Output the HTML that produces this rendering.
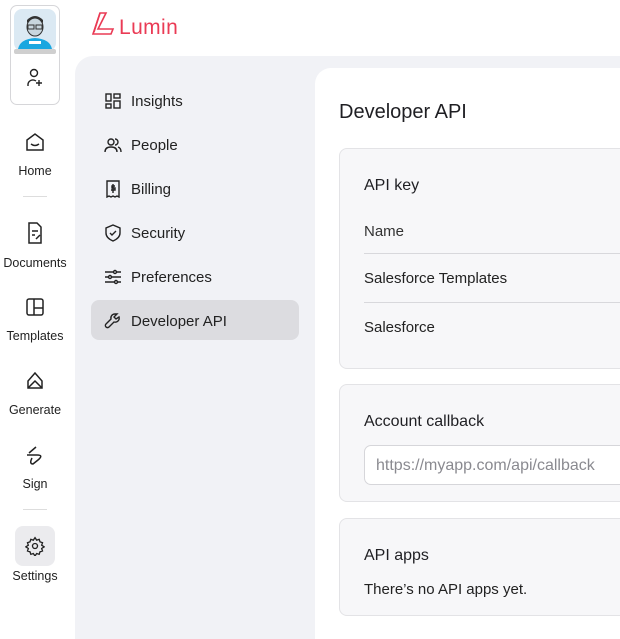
<!DOCTYPE html>
<html><head><meta charset="utf-8"><style>
*{box-sizing:border-box;margin:0;padding:0}
html,body{width:620px;height:639px;overflow:hidden}
body{background:#fff;font-family:"Liberation Sans",sans-serif;color:#1f1f23;position:relative}
.abs{position:absolute}
.nav{position:absolute;left:0;width:70px;text-align:center;font-size:12.5px;color:#222}
.nav svg{display:block;margin:0 auto}
.nav div{margin-top:11px}
.sep{position:absolute;left:23px;width:24px;height:1px;background:#ddd}
.side{position:absolute;left:75px;top:56px;width:560px;height:600px;background:#f1f2f6;border-top-left-radius:18px}
.item{position:absolute;left:91px;width:208px;height:40px;border-radius:8px;font-size:15px;display:flex;align-items:center;padding-left:13px;padding-top:2px;color:#222}
.item svg{margin-right:9px}
.main{position:absolute;left:315px;top:68px;width:320px;height:600px;background:#fff;border-top-left-radius:16px}
.card{position:absolute;left:339px;width:300px;background:#f7f7f9;border:1px solid #e3e3e6;border-radius:8px}
.t{position:absolute;font-size:15px;color:#222}
.h{position:absolute;font-size:16px;color:#1f1f23}
.line{position:absolute;left:364px;width:270px;height:1px;background:#d8d8dc}
</style></head><body>
<div class="abs" style="left:10px;top:5px;width:50px;height:100px;border:1px solid #d6d6d9;border-radius:7px"></div>
<svg class="abs" style="left:14px;top:9px" width="42" height="46" viewBox="0 0 42 46">
<rect x="0" y="0" width="42" height="42" rx="8" fill="#dbe9f3"/><rect x="0" y="40" width="42" height="5" rx="2" fill="#cfcfcf"/>
<path d="M4 40 Q6 30 21 29 Q36 30 38 40Z" fill="#1aa7e0"/><rect x="15" y="32" width="12" height="3" fill="#fff"/>
<ellipse cx="21" cy="18" rx="8" ry="9" fill="#c9d6de" stroke="#333" stroke-width="1"/><path d="M13 14 Q21 5 29 14 L29 11 Q21 3 13 11Z" fill="#333"/>
<rect x="14" y="16" width="6" height="4" fill="none" stroke="#333"/><rect x="22" y="16" width="6" height="4" fill="none" stroke="#333"/></svg>
<svg class="abs" style="left:26px;top:68px" width="18" height="20" viewBox="0 0 18 20" fill="none" stroke="#222" stroke-width="1.4"><circle cx="8" cy="5" r="3.5"/><path d="M2 18v-2a5 5 0 0 1 8-3"/><path d="M13 12v6M10 15h6"/></svg>
<div class="nav" style="top:131px"><svg width="22" height="22" viewBox="0 0 22 22" fill="none" stroke="#222" stroke-width="1.5"><path d="M3 9l8-6 8 6v10H3z"/><path d="M7 13q4 3 8 0"/></svg><div>Home</div></div>
<div class="sep" style="top:196px"></div>
<div class="nav" style="top:221px"><svg width="22" height="24" viewBox="0 0 22 24" fill="none" stroke="#222" stroke-width="1.5"><path d="M13 2H5v20h12V6z"/><path d="M8 10h6M8 14h3M12 18l4-4"/></svg><div>Documents</div></div>
<div class="nav" style="top:296px"><svg width="22" height="22" viewBox="0 0 22 22" fill="none" stroke="#222" stroke-width="1.5"><rect x="3" y="3" width="16" height="16" rx="2"/><path d="M10 3v16M10 12h9"/></svg><div>Templates</div></div>
<div class="nav" style="top:370px"><svg width="22" height="22" viewBox="0 0 22 22" fill="none" stroke="#222" stroke-width="1.5"><path d="M11 3l-7 8v7h14v-7z"/><path d="M4 18l7-7 7 7"/></svg><div>Generate</div></div>
<div class="nav" style="top:444px"><svg width="22" height="22" viewBox="0 0 22 22" fill="none" stroke="#222" stroke-width="1.5"><path d="M5 9l7-6M3 11h10Q20 11 14 16L9 20Q5 20 8 14"/></svg><div>Sign</div></div>
<div class="sep" style="top:509px"></div>
<div class="abs" style="left:15px;top:526px;width:40px;height:40px;border-radius:8px;background:#ebebee"></div>
<svg class="abs" style="left:25px;top:536px" width="20" height="20" viewBox="0 0 24 24" fill="none" stroke="#222" stroke-width="1.6"><circle cx="12" cy="12" r="3"/><path d="M12 2l2 3 3-1 1 3 3 1-1 3 3 2-3 2 1 3-3 1-1 3-3-1-2 3-2-3-3 1-1-3-3-1 1-3-3-2 3-2-1-3 3-1 1-3 3 1z"/></svg>
<div class="nav" style="top:569px">Settings</div>
<svg class="abs" style="left:91px;top:12px" width="26" height="24" viewBox="0 0 26 24" fill="none" stroke="#ea3b55" stroke-width="1.6"><path d="M9 1h6L7 17h15l-2 5H2z"/><path d="M9 1L3 20"/></svg>
<div class="abs" style="left:119px;top:16px;font-size:21px;color:#ea3b55;letter-spacing:.4px">Lumin</div>
<div class="side"></div>
<div class="item" style="top:80px"><svg width="18" height="18" viewBox="0 0 18 18" fill="none" stroke="#222" stroke-width="1.4"><rect x="2" y="2" width="5" height="7"/><rect x="2" y="12" width="5" height="4"/><rect x="10" y="2" width="6" height="4"/><rect x="10" y="9" width="6" height="7"/></svg>Insights</div>
<div class="item" style="top:124px"><svg width="18" height="18" viewBox="0 0 18 18" fill="none" stroke="#222" stroke-width="1.4"><circle cx="7" cy="6" r="3"/><path d="M1 16q0-5 6-5t6 5M11 3a3 3 0 0 1 0 6M14 11q3 1 3 5"/></svg>People</div>
<div class="item" style="top:168px"><svg width="18" height="18" viewBox="0 0 18 18" fill="none" stroke="#222" stroke-width="1.4"><path d="M3 1h12v16l-2-1-2 1-2-1-2 1-2-1-2 1z"/><path d="M11 6H8v2h3v2H7M9 4v9"/></svg>Billing</div>
<div class="item" style="top:212px"><svg width="18" height="18" viewBox="0 0 18 18" fill="none" stroke="#222" stroke-width="1.4"><path d="M9 1l7 3v5q0 5-7 8-7-3-7-8V4z"/><path d="M6 9l2 2 4-4"/></svg>Security</div>
<div class="item" style="top:256px"><svg width="18" height="18" viewBox="0 0 18 18" fill="none" stroke="#222" stroke-width="1.4"><path d="M1 4h16M1 9h16M1 14h16"/><circle cx="11" cy="4" r="1.5" fill="#f1f2f6"/><circle cx="6" cy="9" r="1.5" fill="#f1f2f6"/><circle cx="12" cy="14" r="1.5" fill="#f1f2f6"/></svg>Preferences</div>
<div class="item" style="top:300px;background:#dcdce0"><svg width="18" height="18" viewBox="0 0 18 18" fill="none" stroke="#222" stroke-width="1.4"><path d="M11 2a4 4 0 0 0-4 5L2 12a2 2 0 0 0 3 3l5-5a4 4 0 0 0 5-5l-3 2-2-2 3-3z"/></svg>Developer API</div>
<div class="main"></div>
<div class="abs" style="left:339px;top:101px;font-size:20px;color:#1f1f23">Developer API</div>
<div class="card" style="top:148px;height:221px"></div>
<div class="h" style="left:364px;top:177px">API key</div>
<div class="t" style="left:364px;top:223px;color:#333">Name</div>
<div class="line" style="top:253px"></div>
<div class="t" style="left:364px;top:270px">Salesforce Templates</div>
<div class="line" style="top:302px"></div>
<div class="t" style="left:364px;top:319px">Salesforce</div>
<div class="card" style="top:384px;height:118px"></div>
<div class="h" style="left:364px;top:413px">Account callback</div>
<div class="abs" style="left:364px;top:445px;width:280px;height:40px;background:#fff;border:1px solid #d6d6da;border-radius:7px;font-size:16px;color:#8a8a90;padding:11px 0 0 11px">https://myapp.com/api/callback</div>
<div class="card" style="top:518px;height:98px"></div>
<div class="h" style="left:364px;top:547px">API apps</div>
<div class="t" style="left:364px;top:581px">There’s no API apps yet.</div>
</body></html>
